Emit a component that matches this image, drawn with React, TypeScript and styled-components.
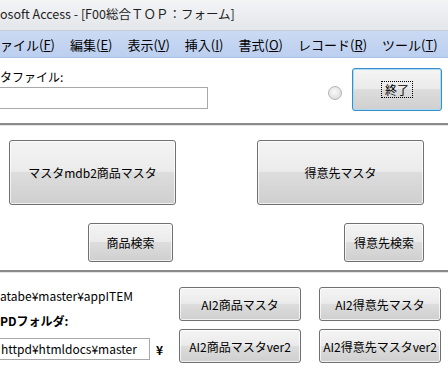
import styled, { createGlobalStyle } from "styled-components";

const GlobalStyle = createGlobalStyle`
  html, body {
    margin: 0;
    padding: 0;
    background: #fff;
  }
`;

const FONT = `"Noto Sans CJK JP", "Noto Sans", sans-serif`;

type MenuItem = { label: string; key: string };

const menuItems: MenuItem[] = [
  { label: "ァイル", key: "F" },
  { label: "編集", key: "E" },
  { label: "表示", key: "V" },
  { label: "挿入", key: "I" },
  { label: "書式", key: "O" },
  { label: "レコード", key: "R" },
  { label: "ツール", key: "T" },
];

const App = () => {
  return (
    <Window>
      <GlobalStyle />
      <TitleBar>
        <TitleText>osoft Access - [F00総合ＴＯＰ：フォーム]</TitleText>
      </TitleBar>
      <MenuBar>
        {menuItems.map((m) => (
          <MenuEntry key={m.key + m.label}>
            {m.label}(<u>{m.key}</u>)
          </MenuEntry>
        ))}
      </MenuBar>

      <TopSection>
        <FieldColumn>
          <FieldLabel>タファイル:</FieldLabel>
          <TextBox $width={208} />
        </FieldColumn>
        <Spacer />
        <Radio />
        <ActionButton $w={90} $h={43} $focused>
          <FocusText>終了</FocusText>
        </ActionButton>
      </TopSection>

      <Divider />

      <MiddleSection>
        <LeftColumn>
          <ActionButton $w={167} $h={65}>
            マスタmdb2商品マスタ
          </ActionButton>
          <ActionButton $w={85} $h={39} $offset={79}>
            商品検索
          </ActionButton>
        </LeftColumn>
        <RightColumn>
          <ActionButton $w={167} $h={65}>
            得意先マスタ
          </ActionButton>
          <ActionButton $w={80} $h={39}>
            得意先検索
          </ActionButton>
        </RightColumn>
      </MiddleSection>

      <Divider />

      <BottomSection>
        <PathColumn>
          <PathText>atabe¥master¥appITEM</PathText>
          <BoldLabel>PDフォルダ:</BoldLabel>
          <PathRow>
            <TextBox $width={150}>httpd¥htmldocs¥master</TextBox>
            <Yen>¥</Yen>
          </PathRow>
        </PathColumn>
        <ButtonGrid>
          <ActionButton $w={122} $h={34}>AI2商品マスタ</ActionButton>
          <ActionButton $w={122} $h={34}>AI2得意先マスタ</ActionButton>
          <ActionButton $w={122} $h={34}>AI2商品マスタver2</ActionButton>
          <ActionButton $w={122} $h={34}>AI2得意先マスタver2</ActionButton>
        </ButtonGrid>
      </BottomSection>
    </Window>
  );
};

const Window = styled.div`
  width: 448px;
  height: 370px;
  overflow: hidden;
  background: #fff;
  font-family: ${FONT};
  color: #000;
`;

const TitleBar = styled.div`
  height: 30px;
  display: flex;
  align-items: center;
  background: linear-gradient(#f3f4f6, #e3e6ea);
  border-bottom: 1px solid #c9cdd3;
`;

const TitleText = styled.span`
  font-size: 12.5px;
  color: #1e1e1e;
  white-space: nowrap;
  margin-top: -4px;
`;

const MenuBar = styled.div`
  height: 26px;
  display: flex;
  align-items: center;
  gap: 15px;
  background: linear-gradient(#cbdaf3, #bccfef);
  border-bottom: 1px solid #a9bfe4;
`;

const MenuEntry = styled.span`
  font-size: 13px;
  white-space: nowrap;
  color: #000;
`;

const TopSection = styled.div`
  height: 65px;
  display: flex;
  align-items: flex-start;
  padding: 10px 6px 0 0;
  box-sizing: border-box;
`;

const FieldColumn = styled.div`
  display: flex;
  flex-direction: column;
  gap: 3px;
`;

const FieldLabel = styled.div`
  font-size: 12px;
  line-height: 14px;
  margin-top: 2px;
`;

const TextBox = styled.div<{ $width: number }>`
  width: ${(p) => p.$width}px;
  height: 22px;
  box-sizing: border-box;
  border: 1px solid #a8a8a8;
  border-left: none;
  background: #fff;
  font-size: 12px;
  line-height: 20px;
  padding-left: 1px;
  white-space: nowrap;
  overflow: hidden;
`;

const Spacer = styled.div`
  flex: 1;
`;

const Radio = styled.div`
  width: 12px;
  height: 12px;
  border-radius: 50%;
  border: 1px solid #b4b4b4;
  background: radial-gradient(circle at 45% 40%, #fafafa, #d4d4d4);
  margin: 18px 10px 0 0;
`;

const ActionButton = styled.button<{
  $w: number;
  $h: number;
  $offset?: number;
  $focused?: boolean;
}>`
  width: ${(p) => p.$w}px;
  height: ${(p) => p.$h}px;
  margin-left: ${(p) => p.$offset ?? 0}px;
  box-sizing: border-box;
  padding: 0;
  border-radius: 3px;
  border: 1px solid ${(p) => (p.$focused ? "#3c8cc8" : "#707070")};
  box-shadow: ${(p) =>
    p.$focused
      ? "inset 0 0 0 1px #a8dcf6"
      : "inset 0 0 0 1px rgba(255,255,255,0.7)"};
  background: linear-gradient(
    #f4f4f4 0%,
    #ebebeb 48%,
    #dddddd 50%,
    #cfcfcf 100%
  );
  font-family: ${FONT};
  font-size: 12px;
  font-weight: 400;
  color: #000;
  white-space: nowrap;
  display: flex;
  align-items: center;
  justify-content: center;
`;

const FocusText = styled.span`
  outline: 1px dotted #000;
  padding: 0 3px;
  line-height: 15px;
`;

const Divider = styled.div`
  height: 2px;
  background: #8a8a8a;
  border-bottom: 1px solid #e4e4e4;
`;

const MiddleSection = styled.div`
  height: 144px;
  display: flex;
  padding: 14px 0 0 9px;
  box-sizing: border-box;
`;

const LeftColumn = styled.div`
  display: flex;
  flex-direction: column;
  gap: 18px;
`;

const RightColumn = styled.div`
  display: flex;
  flex-direction: column;
  align-items: flex-end;
  gap: 18px;
  margin-left: 81px;
`;

const BottomSection = styled.div`
  display: flex;
  padding-top: 14px;
`;

const PathColumn = styled.div`
  width: 179px;
  display: flex;
  flex-direction: column;
`;

const PathText = styled.div`
  font-size: 12px;
  line-height: 16px;
  margin-top: 1px;
`;

const BoldLabel = styled.div`
  font-size: 12px;
  font-weight: bold;
  line-height: 16px;
  margin-top: 9px;
`;

const PathRow = styled.div`
  display: flex;
  align-items: center;
  margin-top: 9px;
`;

const Yen = styled.span`
  font-size: 12px;
  font-weight: bold;
  margin-left: 6px;
`;

const ButtonGrid = styled.div`
  display: grid;
  grid-template-columns: 122px 122px;
  column-gap: 18px;
  row-gap: 8px;
`;

export default App;
